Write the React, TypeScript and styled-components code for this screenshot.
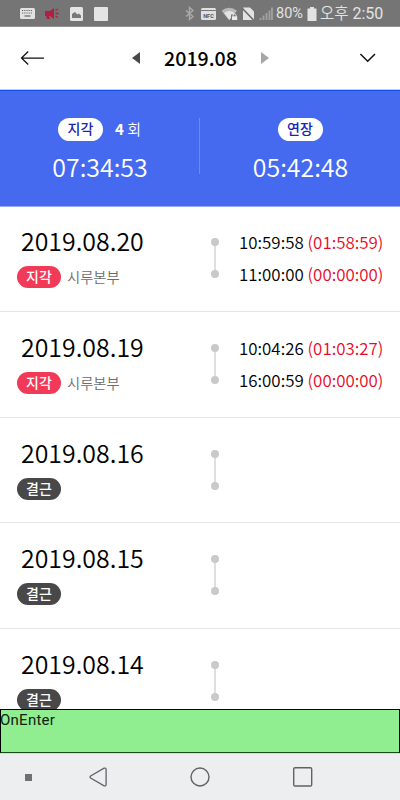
import React from "react";
import styled, { createGlobalStyle } from "styled-components";

const demiLight = `"Noto Sans CJK KR DemiLight", "Noto Sans CJK KR", sans-serif`;

const Global = createGlobalStyle`
  * { box-sizing: border-box; }
  body { margin: 0; background: #fff; }
`;

const Screen = styled.div`
  width: 400px;
  height: 800px;
  display: flex;
  flex-direction: column;
  overflow: hidden;
  background: #fff;
  color: #000;
  font-family: "Noto Sans CJK KR", sans-serif;
`;

const StatusBar = styled.div`
  flex: none;
  height: 27px;
  display: flex;
  justify-content: space-between;
  padding: 0 17px 0 19px;
  background: #757575;
  border-bottom: 1px solid #929292;
`;

const StatusGroup = styled.div`
  display: flex;
  align-items: center;
  height: 27px;
`;

const StatusText = styled.span<{ $size: number; $left: number; $width: number }>`
  margin-left: ${(p) => p.$left}px;
  width: ${(p) => p.$width}px;
  font: 400 ${(p) => p.$size}px/29px Roboto, "Noto Sans CJK KR", sans-serif;
  white-space: nowrap;
  color: #e3e3e3;
`;

const KoreanThin = styled.span`
  font-family: ${demiLight};
  font-weight: 350;
  font-size: 15.5px;
  line-height: 1;
`;

const Header = styled.header`
  flex: none;
  height: 63px;
  display: grid;
  grid-template-columns: 120px 160px 120px;
  align-items: center;
  border-bottom: 1px solid #cfcdc6;
`;

const BackSlot = styled.div`
  display: flex;
  padding-left: 20px;
`;

const MonthPicker = styled.div`
  display: flex;
  align-items: center;
  justify-content: space-between;
  padding: 0 11px 0 12px;
`;

const Month = styled.h1`
  margin: 0;
  font-size: 19.6px;
  line-height: 30px;
  font-weight: 500;
  width: 74px;
  text-align: center;
  white-space: nowrap;
`;

const MenuSlot = styled.div`
  display: flex;
  justify-content: flex-end;
  padding-right: 23px;
`;

const Summary = styled.section`
  flex: none;
  height: 117px;
  display: grid;
  grid-template-columns: 199px 1px 200px;
  background: #456af0;
  border-top: 1px solid #0c51f8;
  border-bottom: 1px solid #98a6f6;
`;

const SummaryCell = styled.div`
  padding-top: 27px;
  display: flex;
  flex-direction: column;
  align-items: center;
  color: #fff;
`;

const Divider = styled.div`
  height: 56px;
  margin-top: 27px;
  background: #6d8af5;
`;

const SummaryTop = styled.div`
  display: flex;
  align-items: center;
  height: 23px;
`;

const Count = styled.span`
  margin-left: 12px;
  font-size: 15px;
  line-height: 21px;
  height: 23px;
  font-family: ${demiLight};
  font-weight: 350;
  white-space: nowrap;
  b { font-family: "Noto Sans CJK KR", sans-serif; font-weight: 700; }
`;

const Total = styled.div`
  margin-top: 7px;
  padding-left: 1px;
  height: 36px;
  font-family: ${demiLight};
  font-size: 24.9px;
  line-height: 36px;
  font-weight: 350;
`;

const Pill = styled.span<{ $tone: "late" | "absent" | "summary" }>`
  display: inline-block;
  flex: none;
  width: ${(p) => (p.$tone === "summary" ? 45 : 44)}px;
  height: ${(p) => (p.$tone === "summary" ? 23 : 22)}px;
  border-radius: 12px;
  text-align: center;
  font-size: 14px;
  line-height: ${(p) => (p.$tone === "summary" ? 21 : 21)}px;
  font-weight: 500;
  color: ${(p) => (p.$tone === "summary" ? "#1925b4" : "#fff")};
  background: ${(p) => ({ late: "#f03a58", absent: "#484848", summary: "#fff" })[p.$tone]};
`;

const List = styled.main`
  flex: 1;
  min-height: 0;
  margin-top: -0.6px;
  overflow: hidden;
`;

const Row = styled.article`
  height: 105.6px;
  display: grid;
  grid-template-columns: 210px 29px 161px;
  border-bottom: 1px solid #e6e6e6;
`;

const DayInfo = styled.div`
  padding: 17px 0 0 17px;
`;

const DateText = styled.div`
  padding-left: 4px;
  height: 36px;
  font-family: ${demiLight};
  font-size: 24.9px;
  line-height: 35px;
  font-weight: 350;
`;

const Tags = styled.div`
  display: flex;
  align-items: center;
  margin-top: 7px;
  height: 22px;
`;

const Place = styled.span`
  margin-left: 6px;
  font-family: ${demiLight};
  font-size: 14.3px;
  line-height: 22px;
  font-weight: 350;
  color: #6c6c6c;
`;

const Track = styled.div`
  padding-top: 31px;
`;

const Times = styled.div`
  padding-top: 19.5px;
  font-family: ${demiLight};
  font-size: 16.9px;
  line-height: 32px;
  font-weight: 350;
  white-space: nowrap;
`;

const TimeLine = styled.div`
  height: 32px;
`;

const Late = styled.span`
  color: #ea0824;
`;

const EnterBox = styled.div`
  flex: none;
  height: 44px;
  border: 1px solid #000;
  border-bottom-color: #174d17;
  background: #90ee90;
  font: 15px/20px Roboto, sans-serif;
  letter-spacing: 0.25px;
  color: #102010;
  text-indent: -1px;
`;

const NavBar = styled.nav`
  flex: none;
  height: 47px;
  display: flex;
  align-items: center;
  background: #edeef0;
  border-top: 1px solid #d4dcd5;
`;

const NavIcon = styled.span<{ $gap: number }>`
  display: flex;
  margin-left: ${(p) => p.$gap}px;
`;

const LeftStatusIcons = () => (
  <svg width="92" height="27" viewBox="19 0 92 27">
    <rect x="20" y="8" width="15" height="11" rx="1.5" fill="#e2e2e2" />
    <path d="M22 10.5h11M22 13h11" stroke="#666" strokeWidth="1.2" strokeDasharray="1.2 1" />
    <path d="M24.5 16h6" stroke="#666" strokeWidth="1.2" />
    <path d="M45 11h5l4-3v11l-4-3h-1l1 3h-3l-1-3h-1z" fill="#b41e42" />
    <path d="M55.5 10.5l2.5-1.5M55.5 13.5h3M55.5 16l2.5 1.5" stroke="#b41e42" strokeWidth="1.3" />
    <rect x="70" y="7" width="13" height="14" rx="1.5" fill="#e4e4e4" />
    <path d="M72 18v-4l3-2 2.3 2.5 1.5-1 2.2 2V18z" fill="#777" />
    <rect x="94" y="7" width="14" height="14" rx="1" fill="#e4e4e4" />
  </svg>
);

const RightStatusIcons = () => (
  <svg width="90" height="27" viewBox="184 0 90 27">
    <path d="M186 10.5l7 6-3.5 3v-12l3.5 3-7 6" fill="none" stroke="#aaa" strokeWidth="1.4" />
    <rect x="201" y="8" width="15" height="12" rx="1.5" fill="#e0e0e0" />
    <path d="M201 10.5h15" stroke="#777" />
    <text x="208.5" y="17.5" textAnchor="middle" fontFamily="Roboto" fontWeight="700" fontSize="5.6" fill="#555">NFC</text>
    <path d="M221.5 10.7Q229.2 4.7 237 10.7L229.2 20z" fill="#b8b8b8" />
    <path d="M224 13q5.2-4 10.5 0l-5.3 7z" fill="#e3e3e3" />
    <path d="M231 14.5h7v6h-7z" fill="#757575" />
    <path d="M232 16.3h5.2V20H232z" fill="#ececec" />
    <path d="M233.1 16.5v-1a1.5 1.5 0 013 0v1" fill="none" stroke="#ececec" />
    <path d="M243 7.5h7l4 4V20h-11z" fill="#e3e3e3" />
    <path d="M242 8l11.5 12" stroke="#686868" strokeWidth="1.5" />
    <path d="M260.5 20v-2M263.5 20v-4.5M266.5 20v-7M269.5 20v-9.5M272 20V7.5" stroke="#a0a0a0" strokeWidth="1.9" />
  </svg>
);

const Battery = () => (
  <svg width="10" height="14" viewBox="0 0 10 14">
    <path d="M3 0h4v1.5h2.5V14H.5V1.5H3z" fill="#e3e3e3" />
  </svg>
);

const BackArrow = () => (
  <svg width="25" height="16" viewBox="0 0 25 16" fill="none" stroke="#111" strokeWidth="1.25">
    <path d="M24 8H1.5M8.2 1.5L1.5 8l6.7 6.5" />
  </svg>
);

const Triangle = ({ next = false }: { next?: boolean }) => (
  <svg width="8" height="12" viewBox="0 0 8 12">
    <path d={next ? "M0 0l8 6-8 6z" : "M8 0L0 6l8 6z"} fill={next ? "#a6a6a6" : "#484848"} />
  </svg>
);

const Chevron = () => (
  <svg width="18" height="10" viewBox="0 0 18 10" fill="none" stroke="#111" strokeWidth="1.5">
    <path d="M1.4 1l7.3 7.3L16 1" />
  </svg>
);

const Timeline = () => (
  <svg width="10" height="42" viewBox="0 0 10 42">
    <path d="M5 5v32" stroke="#dedede" strokeWidth="2" />
    <circle cx="5" cy="5" r="4" fill="#c9c9c9" />
    <circle cx="5" cy="37" r="4" fill="#c9c9c9" />
  </svg>
);

type Day = { date: string; place?: string; times?: [string, string][] };

const days: Day[] = [
  { date: "2019.08.20", place: "시루본부", times: [["10:59:58", "01:58:59"], ["11:00:00", "00:00:00"]] },
  { date: "2019.08.19", place: "시루본부", times: [["10:04:26", "01:03:27"], ["16:00:59", "00:00:00"]] },
  { date: "2019.08.16" },
  { date: "2019.08.15" },
  { date: "2019.08.14" },
];

const DayRow = ({ day }: { day: Day }) => (
  <Row>
    <DayInfo>
      <DateText>{day.date}</DateText>
      <Tags>
        <Pill $tone={day.place ? "late" : "absent"}>{day.place ? "지각" : "결근"}</Pill>
        {day.place && <Place>{day.place}</Place>}
      </Tags>
    </DayInfo>
    <Track><Timeline /></Track>
    <Times>
      {day.times?.map(([time, late]) => (
        <TimeLine key={time}>{time} <Late>({late})</Late></TimeLine>
      ))}
    </Times>
  </Row>
);

export default function App() {
  return (
    <>
      <Global />
      <Screen>
        <StatusBar>
          <StatusGroup><LeftStatusIcons /></StatusGroup>
          <StatusGroup>
            <RightStatusIcons />
            <StatusText $size={14.5} $left={2} $width={31}>80%</StatusText>
            <Battery />
            <StatusText $size={16} $left={3} $width={63}><KoreanThin>오후</KoreanThin> 2:50</StatusText>
          </StatusGroup>
        </StatusBar>
        <Header>
          <BackSlot><BackArrow /></BackSlot>
          <MonthPicker>
            <Triangle />
            <Month>2019.08</Month>
            <Triangle next />
          </MonthPicker>
          <MenuSlot><Chevron /></MenuSlot>
        </Header>
        <Summary>
          <SummaryCell>
            <SummaryTop>
              <Pill $tone="summary">지각</Pill>
              <Count><b>4</b> 회</Count>
            </SummaryTop>
            <Total>07:34:53</Total>
          </SummaryCell>
          <Divider />
          <SummaryCell>
            <SummaryTop><Pill $tone="summary">연장</Pill></SummaryTop>
            <Total>05:42:48</Total>
          </SummaryCell>
        </Summary>
        <List>
          {days.map((day) => <DayRow key={day.date} day={day} />)}
        </List>
        <EnterBox>OnEnter</EnterBox>
        <NavBar>
          <NavIcon $gap={25}>
            <svg width="7" height="7"><rect width="7" height="7" fill="#707070" /></svg>
          </NavIcon>
          <NavIcon $gap={57}>
            <svg width="19" height="20" viewBox="0 0 19 20">
              <path d="M1.6 9q-1 1 0 2l13.5 7.8q2 .6 2-1.3v-15q0-1.9-2-1.3z" fill="none" stroke="#606264" strokeWidth="1.3" />
            </svg>
          </NavIcon>
          <NavIcon $gap={82}>
            <svg width="20" height="20"><circle cx="10" cy="10" r="9" fill="none" stroke="#606264" strokeWidth="1.4" /></svg>
          </NavIcon>
          <NavIcon $gap={82}>
            <svg width="21" height="20"><rect x="1.7" y=".7" width="18" height="18.3" rx="1.3" fill="none" stroke="#606264" strokeWidth="1.4" /></svg>
          </NavIcon>
        </NavBar>
      </Screen>
    </>
  );
}
